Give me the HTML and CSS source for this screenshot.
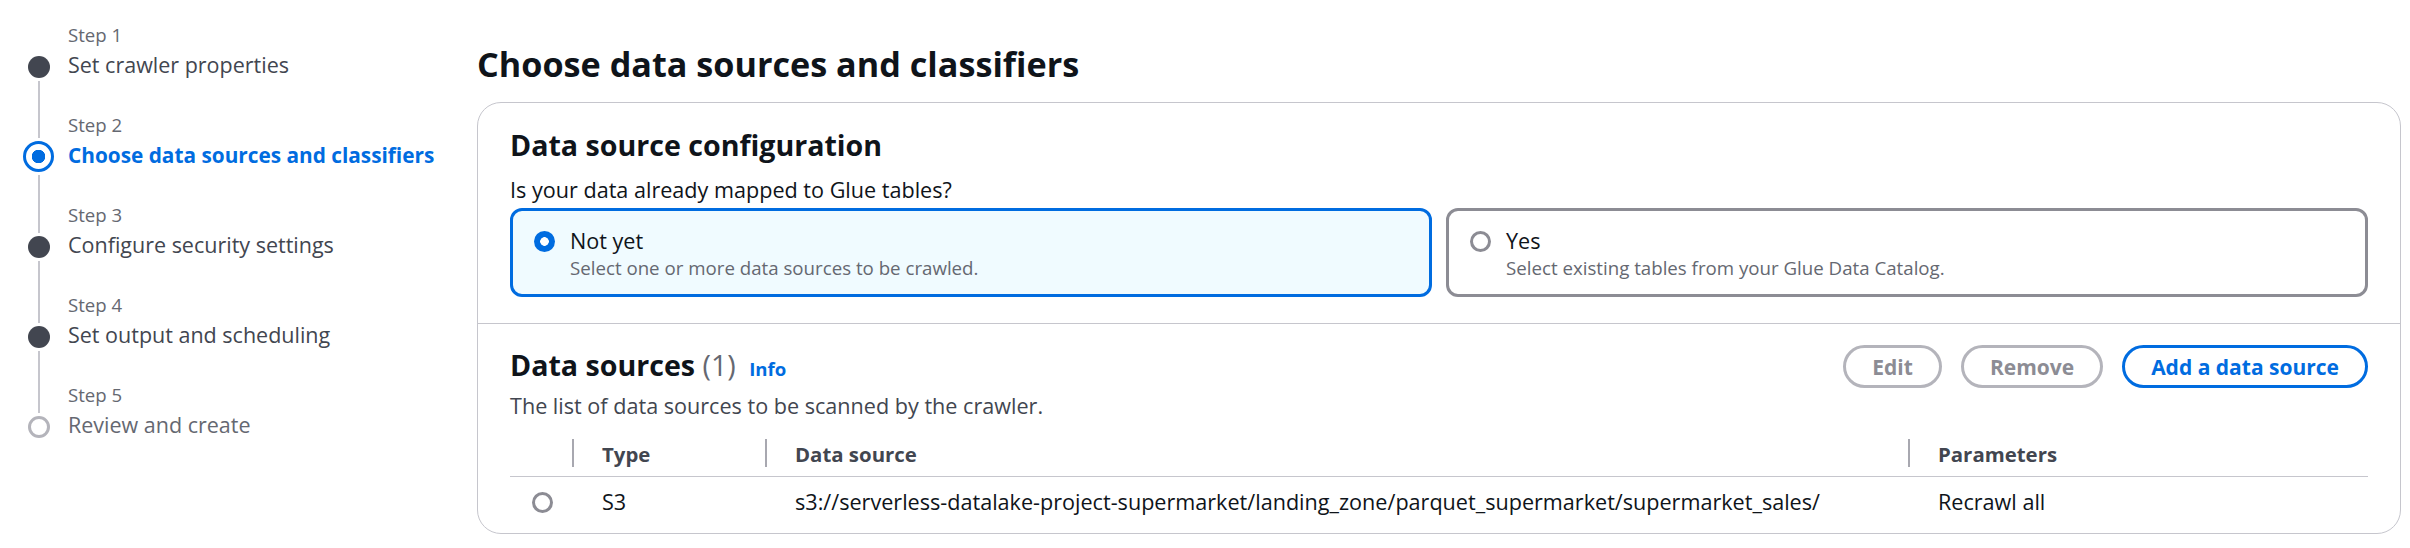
FILE: index.html
```html
<!DOCTYPE html>
<html lang="en">
<head>
<meta charset="utf-8">
<title>Choose data sources and classifiers</title>
<link rel="stylesheet" href="styles.css">
</head>
<body>
<div class="top-shadow"></div>
<div class="layout">
  <nav class="steps">
    <div class="step done first">
      <div class="rail"><span class="seg-top"></span><span class="dot"></span><span class="seg-bottom"></span></div>
      <div class="step-text"><div class="step-label">Step 1</div><div class="step-title">Set crawler properties</div></div>
    </div>
    <div class="step active">
      <div class="rail"><span class="seg-top"></span><span class="dot"></span><span class="seg-bottom"></span></div>
      <div class="step-text"><div class="step-label">Step 2</div><div class="step-title">Choose data sources and classifiers</div></div>
    </div>
    <div class="step done">
      <div class="rail"><span class="seg-top"></span><span class="dot"></span><span class="seg-bottom"></span></div>
      <div class="step-text"><div class="step-label">Step 3</div><div class="step-title">Configure security settings</div></div>
    </div>
    <div class="step done">
      <div class="rail"><span class="seg-top"></span><span class="dot"></span><span class="seg-bottom"></span></div>
      <div class="step-text"><div class="step-label">Step 4</div><div class="step-title">Set output and scheduling</div></div>
    </div>
    <div class="step todo last">
      <div class="rail"><span class="seg-top"></span><span class="dot"></span><span class="seg-bottom"></span></div>
      <div class="step-text"><div class="step-label">Step 5</div><div class="step-title">Review and create</div></div>
    </div>
  </nav>

  <main class="main">
    <h1 class="page-title">Choose data sources and classifiers</h1>
    <div class="card">
      <section class="card-section config">
        <h2 class="section-title">Data source configuration</h2>
        <div class="field-label">Is your data already mapped to Glue tables?</div>
        <div class="tiles">
          <div class="tile selected">
            <span class="radio checked"></span>
            <div class="tile-text">
              <div class="tile-title">Not yet</div>
              <div class="tile-desc">Select one or more data sources to be crawled.</div>
            </div>
          </div>
          <div class="tile">
            <span class="radio"></span>
            <div class="tile-text">
              <div class="tile-title">Yes</div>
              <div class="tile-desc">Select existing tables from your Glue Data Catalog.</div>
            </div>
          </div>
        </div>
      </section>
      <section class="card-section sources">
        <div class="sources-head">
          <h2 class="section-title">Data sources <span class="count">(1)</span> <a class="info">Info</a></h2>
          <div class="actions">
            <button class="btn disabled">Edit</button>
            <button class="btn disabled">Remove</button>
            <button class="btn normal">Add a data source</button>
          </div>
        </div>
        <div class="sources-desc">The list of data sources to be scanned by the crawler.</div>
        <table class="table">
          <colgroup>
            <col class="c-sel"><col class="c-type"><col class="c-src"><col>
          </colgroup>
          <thead>
            <tr>
              <th></th>
              <th><div class="th-in">Type</div></th>
              <th><div class="th-in">Data source</div></th>
              <th><div class="th-in">Parameters</div></th>
            </tr>
          </thead>
          <tbody>
            <tr>
              <td class="sel"><span class="radio"></span></td>
              <td>S3</td>
              <td>s3://serverless-datalake-project-supermarket/landing_zone/parquet_supermarket/supermarket_sales/</td>
              <td>Recrawl all</td>
            </tr>
          </tbody>
        </table>
      </section>
    </div>
  </main>
</div>
</body>
</html>
```
FILE: styles.css
```css
* { box-sizing: border-box; }

html, body {
  margin: 0;
  background: #ffffff;
  font-family: "Open Sans", "Noto Sans", sans-serif;
  color: #0f141a;
}

.top-shadow {
  height: 0;
  margin: 0 20px 0 30px;
  box-shadow: 0 1px 5px rgba(0, 7, 22, 0.06);
}

.layout {
  display: flex;
}

/* ---------- Steps navigation ---------- */
.steps {
  width: 477px;
  flex: none;
  padding: 23px 0 0 23px;
}

.step {
  display: flex;
  height: 90px;
}

.rail {
  width: 31px;
  flex: none;
  display: flex;
  flex-direction: column;
  align-items: center;
}

.seg-top {
  width: 2px;
  height: 30px;
  margin-bottom: 3px;
  background: #c6c6cd;
  flex: none;
}

.seg-bottom {
  width: 2px;
  flex: 1;
  margin-top: 3px;
  background: #c6c6cd;
}

.first .seg-top,
.last .seg-bottom { background: transparent; }

.dot {
  width: 22px;
  height: 22px;
  border-radius: 50%;
  background: #424650;
  flex: none;
}

.active .seg-top { height: 25px; }

.active .dot {
  width: 31px;
  height: 31px;
  border: 3px solid #006ce0;
  background: radial-gradient(circle, #006ce0 0 6.5px, #ffffff 7px);
}

.todo .dot {
  background: #ffffff;
  border: 3px solid #b4b4bb;
}

.step-text {
  margin-left: 14px;
}

.step-label {
  font-size: 18.6px;
  line-height: 24px;
  color: #656871;
}

.step-title {
  margin-top: 3px;
  font-size: 21.5px;
  line-height: 30px;
  color: #424650;
  white-space: nowrap;
}

.active .step-title {
  font-weight: 700;
  font-size: 20.8px;
  color: #006ce0;
}

.todo .step-title { color: #656871; }

/* ---------- Main ---------- */
.main {
  flex: 1;
  padding: 43px 9px 0 0;
}

.page-title {
  margin: 0;
  font-size: 34.2px;
  line-height: 42px;
  font-weight: 700;
  color: #0f141a;
}

.card {
  margin-top: 17px;
  border: 1px solid #c6c6cd;
  border-radius: 24px;
  background: #ffffff;
}

.card-section {
  padding: 0 32px;
}

.config {
  padding-top: 24px;
  padding-bottom: 26px;
}

.section-title {
  margin: 0;
  font-size: 28.6px;
  line-height: 36px;
  font-weight: 700;
  color: #0f141a;
}

.field-label {
  margin-top: 12px;
  font-size: 21.6px;
  line-height: 30px;
  color: #0f141a;
}

.tiles {
  margin-top: 3px;
  display: grid;
  grid-template-columns: 1fr 1fr;
  gap: 14px;
}

.tile {
  display: flex;
  align-items: flex-start;
  gap: 15px;
  padding: 15px 21px 14px;
  border: 3px solid #8c8c94;
  border-radius: 12px;
  background: #ffffff;
}

.tile.selected {
  border-color: #006ce0;
  background: #f0fbff;
}

.radio {
  display: inline-block;
  width: 21px;
  height: 21px;
  border-radius: 50%;
  border: 3px solid #8c8c94;
  background: #ffffff;
  flex: none;
}

.tile .radio { margin-top: 4.5px; }

.radio.checked {
  border: none;
  background: radial-gradient(circle, #ffffff 0 4px, #006ce0 4.6px);
}

.tile-title {
  font-size: 21.6px;
  line-height: 30px;
  color: #0f141a;
}

.tile-desc {
  font-size: 18.7px;
  line-height: 24px;
  color: #656871;
}

/* ---------- Data sources ---------- */
.sources {
  border-top: 1px solid #c6c6cd;
  padding-top: 21px;
  padding-bottom: 6px;
}

.sources-head {
  display: flex;
  align-items: center;
  justify-content: space-between;
}

.count {
  font-weight: 400;
  color: #656871;
}

.info {
  margin-left: 6px;
  font-size: 18.6px;
  font-weight: 700;
  color: #006ce0;
}

.actions {
  display: flex;
  gap: 19px;
}

.btn {
  height: 43px;
  padding: 0 26px;
  border: 3px solid #b4b4bb;
  border-radius: 22px;
  background: #ffffff;
  font-family: inherit;
  font-size: 21px;
  font-weight: 700;
  line-height: 30px;
  color: #8c8c94;
}

.btn.normal {
  border-color: #006ce0;
  color: #006ce0;
}

.sources-desc {
  margin-top: 3px;
  font-size: 21.6px;
  line-height: 30px;
  color: #424650;
}

.table {
  width: 100%;
  margin-top: 9px;
  border-collapse: collapse;
  table-layout: fixed;
}

.c-sel { width: 62px; }
.c-type { width: 193px; }
.c-src { width: 1143px; }

.table th {
  padding: 9px 0 9px;
  border-bottom: 1px solid #c6c6cd;
  text-align: left;
  font-weight: 700;
  font-size: 20.4px;
  color: #424650;
}

.th-in {
  height: 28px;
  line-height: 30px;
  padding-left: 28px;
  border-left: 2px solid #a8a8b0;
}

.table td {
  padding: 10px 0 10px 30px;
  font-size: 21.6px;
  line-height: 30px;
  color: #0f141a;
  white-space: nowrap;
  vertical-align: middle;
}

.table td.sel {
  padding-left: 22px;
  line-height: 0;
}
```
